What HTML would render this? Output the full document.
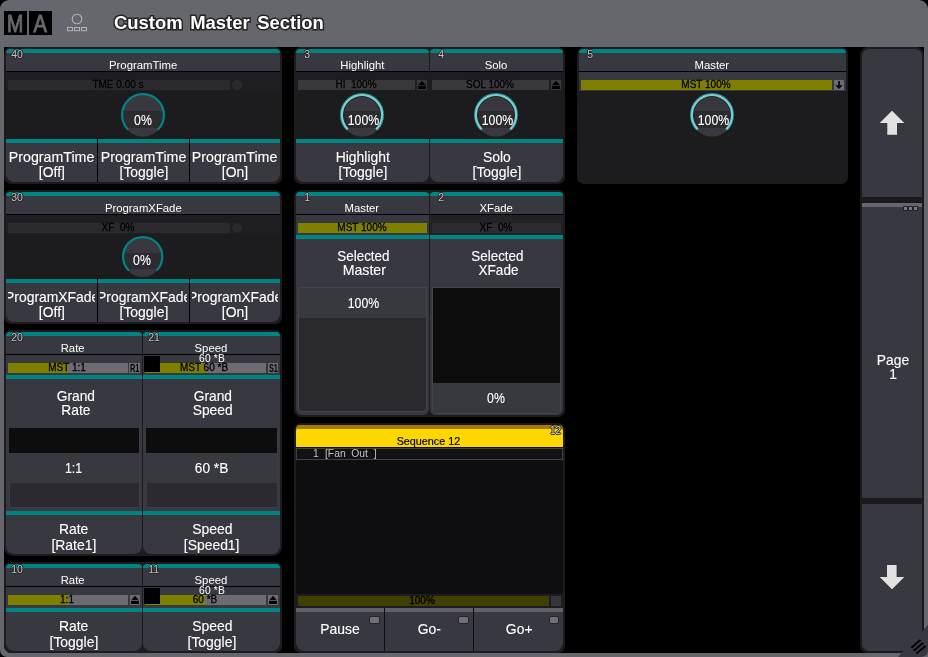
<!DOCTYPE html>
<html lang="en"><head><meta charset="utf-8"><title>Custom Master Section</title>
<style>
html,body{margin:0;padding:0;background:#000;}
body{width:928px;height:657px;position:relative;overflow:hidden;font-family:"Liberation Sans",sans-serif;}
.b{position:absolute;box-sizing:border-box;}
.x{position:absolute;white-space:nowrap;overflow:visible;pointer-events:none;will-change:transform;}
.t{display:inline-block;white-space:nowrap;}
.k .t,.k.t{-webkit-text-stroke:0.12px currentColor;}
.num{text-shadow:-1px 0 0 #222,1px 0 0 #222,0 -1px 0 #222,0 1px 0 #222;}
.ttl .t{-webkit-text-stroke:3px #232325;paint-order:stroke fill;}
</style></head><body>
<div class="b" style="left:0px;top:0px;width:928px;height:657px;background:#66676c;border-radius:9px 9px 0px 7px;"></div>
<div class="b" style="left:4px;top:47px;width:920px;height:605.5px;background:#000000;border-radius:0px 0px 7.5px 7.5px;"></div>
<div class="b" style="left:4px;top:11px;width:23px;height:24px;background:#000000;"></div>
<div class="b" style="left:29px;top:11px;width:23px;height:24px;background:#000000;"></div>
<div class="x " style="left:-184.9px;top:10px;width:400px;height:27px;line-height:27px;font-size:24.5px;color:#66676c;text-align:center;-webkit-text-stroke:1px #66676c;"><span class="t" style="transform:scaleX(0.8);transform-origin:center center">M</span></div>
<div class="x " style="left:-160.3px;top:10px;width:400px;height:27px;line-height:27px;font-size:24.5px;color:#66676c;text-align:center;-webkit-text-stroke:1px #66676c;"><span class="t" style="transform:scaleX(0.82);transform-origin:center center">A</span></div>
<svg class="b" style="left:62px;top:10px" width="30" height="26" viewBox="62 10 30 26"><circle cx="77" cy="19" r="4.8" fill="none" stroke="#b4b4b8" stroke-width="1.1"/><rect x="67.5" y="27.5" width="5" height="3.2" fill="none" stroke="#b4b4b8" stroke-width="1"/><rect x="74.5" y="27.5" width="5" height="3.2" fill="none" stroke="#b4b4b8" stroke-width="1"/><rect x="81.5" y="27.5" width="5" height="3.2" fill="none" stroke="#b4b4b8" stroke-width="1"/></svg>
<div class="x ttl" style="left:114px;top:12px;width:400px;height:21px;line-height:21px;font-size:19px;color:#ffffff;text-align:left;font-weight:700;word-spacing:2.6px;"><span class="t" style="transform:scaleX(0.97);transform-origin:left center">Custom Master Section</span></div>
<div class="b" style="left:4px;top:47px;width:278px;height:136.5px;background:#1c1c1e;border-radius:7px;"></div>
<div class="b" style="left:6px;top:49px;width:274.2px;height:132.5px;background:#000000;border-radius:5px 5px 7.5px 7.5px;"></div>
<div class="b" style="left:6px;top:72px;width:274.2px;height:67px;background:#1c1c1e;"></div>
<div class="b" style="left:6px;top:72px;width:274.2px;height:19px;background:#1e1e22;"></div>
<div class="b" style="left:6px;top:49px;width:274.2px;height:22px;background:#383840;border-radius:6.5px 6.5px 0px 0px;"></div>
<div class="b" style="left:6px;top:49px;width:274.2px;height:4px;background:#008585;border-radius:6.5px 6.5px 0px 0px;"></div>
<div class="b" style="left:6px;top:71px;width:274.2px;height:1px;background:#000000;"></div>
<div class="x num" style="left:-182.8px;top:48.3px;width:400px;height:12px;line-height:12px;font-size:11px;color:#c4c4c8;text-align:center;"><span class="t" style="transform:scaleX(0.95);transform-origin:center center">40</span></div>
<div class="x " style="left:-57.5px;top:59.4px;width:400px;height:12px;line-height:12px;font-size:11px;color:#ffffff;text-align:center;"><span class="t" style="transform:scaleX(1.03);transform-origin:center center">ProgramTime</span></div>
<div class="b" style="left:8px;top:80px;width:222px;height:10px;background:#2a2a2c;"></div>
<div class="x " style="left:-81.8px;top:79.2px;width:400px;height:11px;line-height:11px;font-size:10px;color:#000;text-align:center;-webkit-text-stroke:0.3px #000;"><span class="t" style="transform:scaleX(1);transform-origin:center center">TME 0.00 s</span></div>
<div class="b" style="left:232px;top:80px;width:10px;height:10px;background:#2a2a2c;border-radius:5px;"></div>
<svg class="b" style="left:119px;top:91px" width="48" height="48" viewBox="-24 -24 48 48"><circle cx="0" cy="0" r="21.7" fill="#38383e"/><clipPath id="k0"><circle cx="0" cy="0" r="21.7"/></clipPath><rect x="-22" y="-4" width="44" height="17" fill="#2b2b30" clip-path="url(#k0)"/><path d="M-14.78 14.78A20.9 20.9 0 1 1 14.78 14.78" fill="none" stroke="#008585" stroke-width="2.2"/></svg>
<div class="x  k" style="left:-56.6px;top:111px;width:400px;height:17px;line-height:17px;font-size:15.2px;color:#ffffff;text-align:center;"><span class="t" style="transform:scaleX(0.81);transform-origin:center center">0%</span></div>
<div class="b" style="left:6px;top:139px;width:91px;height:42.5px;background:#383840;border-radius:0px 0px 0px 7.5px;overflow:hidden;"></div>
<div class="b" style="left:6px;top:139px;width:91px;height:4px;background:#008585;"></div>
<div class="b" style="left:8px;top:143px;width:87px;height:38.5px;overflow:hidden">
<div class="x k" style="left:-156.5px;top:5.8px;width:400px;height:16px;line-height:16px;font-size:14.8px;color:#ffffff;text-align:center"><span class="t" style="transform:scaleX(0.96)">ProgramTime</span></div>
<div class="x k" style="left:-156.5px;top:21.2px;width:400px;height:16px;line-height:16px;font-size:14.8px;color:#ffffff;text-align:center"><span class="t" style="transform:scaleX(0.94)">[Off]</span></div>
</div>
<div class="b" style="left:98px;top:139px;width:91px;height:42.5px;background:#383840;overflow:hidden;"></div>
<div class="b" style="left:98px;top:139px;width:91px;height:4px;background:#008585;"></div>
<div class="b" style="left:100px;top:143px;width:87px;height:38.5px;overflow:hidden">
<div class="x k" style="left:-156.5px;top:5.8px;width:400px;height:16px;line-height:16px;font-size:14.8px;color:#ffffff;text-align:center"><span class="t" style="transform:scaleX(0.96)">ProgramTime</span></div>
<div class="x k" style="left:-156.5px;top:21.2px;width:400px;height:16px;line-height:16px;font-size:14.8px;color:#ffffff;text-align:center"><span class="t" style="transform:scaleX(0.94)">[Toggle]</span></div>
</div>
<div class="b" style="left:190px;top:139px;width:90.2px;height:42.5px;background:#383840;border-radius:0px 0px 7.5px 0px;overflow:hidden;"></div>
<div class="b" style="left:190px;top:139px;width:90.2px;height:4px;background:#008585;"></div>
<div class="b" style="left:192px;top:143px;width:86.2px;height:38.5px;overflow:hidden">
<div class="x k" style="left:-156.9px;top:5.8px;width:400px;height:16px;line-height:16px;font-size:14.8px;color:#ffffff;text-align:center"><span class="t" style="transform:scaleX(0.96)">ProgramTime</span></div>
<div class="x k" style="left:-156.9px;top:21.2px;width:400px;height:16px;line-height:16px;font-size:14.8px;color:#ffffff;text-align:center"><span class="t" style="transform:scaleX(0.94)">[On]</span></div>
</div>
<div class="b" style="left:4px;top:190px;width:278px;height:133.5px;background:#1c1c1e;border-radius:7px;"></div>
<div class="b" style="left:6px;top:192px;width:274.2px;height:129.5px;background:#000000;border-radius:5px 5px 7.5px 7.5px;"></div>
<div class="b" style="left:6px;top:215px;width:274.2px;height:64px;background:#1c1c1e;"></div>
<div class="b" style="left:6px;top:215px;width:274.2px;height:19px;background:#1e1e22;"></div>
<div class="b" style="left:6px;top:192px;width:274.2px;height:22px;background:#383840;border-radius:6.5px 6.5px 0px 0px;"></div>
<div class="b" style="left:6px;top:192px;width:274.2px;height:4px;background:#008585;border-radius:6.5px 6.5px 0px 0px;"></div>
<div class="b" style="left:6px;top:214px;width:274.2px;height:1px;background:#000000;"></div>
<div class="x num" style="left:-182.8px;top:191.3px;width:400px;height:12px;line-height:12px;font-size:11px;color:#c4c4c8;text-align:center;"><span class="t" style="transform:scaleX(0.95);transform-origin:center center">30</span></div>
<div class="x " style="left:-57.5px;top:202.4px;width:400px;height:12px;line-height:12px;font-size:11px;color:#ffffff;text-align:center;"><span class="t" style="transform:scaleX(1.03);transform-origin:center center">ProgramXFade</span></div>
<div class="b" style="left:8px;top:223px;width:222px;height:10px;background:#2a2a2c;"></div>
<div class="x " style="left:-81.8px;top:222.2px;width:400px;height:11px;line-height:11px;font-size:10px;color:#000;text-align:center;-webkit-text-stroke:0.3px #000;"><span class="t" style="transform:scaleX(1);transform-origin:center center">XF&nbsp; 0%</span></div>
<div class="b" style="left:232px;top:223px;width:10px;height:10px;background:#2a2a2c;border-radius:5px;"></div>
<svg class="b" style="left:119.8px;top:233.8px" width="45.4" height="45.4" viewBox="-22.7 -22.7 45.4 45.4"><circle cx="0" cy="0" r="20.4" fill="#38383e"/><clipPath id="k1"><circle cx="0" cy="0" r="20.4"/></clipPath><rect x="-20.7" y="-3.5" width="41.4" height="16" fill="#2b2b30" clip-path="url(#k1)"/><path d="M-13.86 13.86A19.6 19.6 0 1 1 13.86 13.86" fill="none" stroke="#008585" stroke-width="2.2"/></svg>
<div class="x  k" style="left:-58.1px;top:251.2px;width:400px;height:17px;line-height:17px;font-size:15.2px;color:#ffffff;text-align:center;"><span class="t" style="transform:scaleX(0.81);transform-origin:center center">0%</span></div>
<div class="b" style="left:6px;top:279px;width:91px;height:42.5px;background:#383840;border-radius:0px 0px 0px 7.5px;overflow:hidden;"></div>
<div class="b" style="left:6px;top:279px;width:91px;height:4px;background:#008585;"></div>
<div class="b" style="left:8px;top:283px;width:87px;height:38.5px;overflow:hidden">
<div class="x k" style="left:-156.5px;top:5.8px;width:400px;height:16px;line-height:16px;font-size:14.8px;color:#ffffff;text-align:center"><span class="t" style="transform:scaleX(0.94)">ProgramXFade</span></div>
<div class="x k" style="left:-156.5px;top:21.2px;width:400px;height:16px;line-height:16px;font-size:14.8px;color:#ffffff;text-align:center"><span class="t" style="transform:scaleX(0.94)">[Off]</span></div>
</div>
<div class="b" style="left:98px;top:279px;width:91px;height:42.5px;background:#383840;overflow:hidden;"></div>
<div class="b" style="left:98px;top:279px;width:91px;height:4px;background:#008585;"></div>
<div class="b" style="left:100px;top:283px;width:87px;height:38.5px;overflow:hidden">
<div class="x k" style="left:-156.5px;top:5.8px;width:400px;height:16px;line-height:16px;font-size:14.8px;color:#ffffff;text-align:center"><span class="t" style="transform:scaleX(0.94)">ProgramXFade</span></div>
<div class="x k" style="left:-156.5px;top:21.2px;width:400px;height:16px;line-height:16px;font-size:14.8px;color:#ffffff;text-align:center"><span class="t" style="transform:scaleX(0.94)">[Toggle]</span></div>
</div>
<div class="b" style="left:190px;top:279px;width:90.2px;height:42.5px;background:#383840;border-radius:0px 0px 7.5px 0px;overflow:hidden;"></div>
<div class="b" style="left:190px;top:279px;width:90.2px;height:4px;background:#008585;"></div>
<div class="b" style="left:192px;top:283px;width:86.2px;height:38.5px;overflow:hidden">
<div class="x k" style="left:-156.9px;top:5.8px;width:400px;height:16px;line-height:16px;font-size:14.8px;color:#ffffff;text-align:center"><span class="t" style="transform:scaleX(0.94)">ProgramXFade</span></div>
<div class="x k" style="left:-156.9px;top:21.2px;width:400px;height:16px;line-height:16px;font-size:14.8px;color:#ffffff;text-align:center"><span class="t" style="transform:scaleX(0.94)">[On]</span></div>
</div>
<div class="b" style="left:294px;top:47px;width:271px;height:136.5px;background:#1c1c1e;border-radius:7px;"></div>
<div class="b" style="left:296px;top:49px;width:133px;height:132.5px;background:#1c1c1e;border-radius:5px 5px 6px 6px;"></div>
<div class="b" style="left:296px;top:72px;width:133px;height:19px;background:#1e1e22;"></div>
<div class="b" style="left:296px;top:49px;width:133px;height:22px;background:#383840;border-radius:6.5px 6.5px 0px 0px;"></div>
<div class="b" style="left:296px;top:49px;width:133px;height:4px;background:#008585;border-radius:6.5px 6.5px 0px 0px;"></div>
<div class="b" style="left:296px;top:71px;width:133px;height:1px;background:#000000;"></div>
<div class="x num" style="left:107.2px;top:48.3px;width:400px;height:12px;line-height:12px;font-size:11px;color:#c4c4c8;text-align:center;"><span class="t" style="transform:scaleX(0.95);transform-origin:center center">3</span></div>
<div class="x " style="left:161.9px;top:59.4px;width:400px;height:12px;line-height:12px;font-size:11px;color:#ffffff;text-align:center;"><span class="t" style="transform:scaleX(1.03);transform-origin:center center">Highlight</span></div>
<div class="b" style="left:298px;top:80px;width:117px;height:10px;background:#39393b;"></div>
<div class="x " style="left:155.7px;top:79.2px;width:400px;height:11px;line-height:11px;font-size:10px;color:#000;text-align:center;-webkit-text-stroke:0.3px #000;"><span class="t" style="transform:scaleX(1);transform-origin:center center">HI&nbsp; 100%</span></div>
<div class="b" style="left:417px;top:80px;width:10px;height:10px;background:#39393b;"></div>
<svg class="b" style="left:417px;top:80px" width="10" height="10" viewBox="0 0 10 10"><path d="M5 0.8L8.7 4.9H1.3Z" fill="#000"/><rect x="1.1" y="5.8" width="7.8" height="3.2" fill="#000"/></svg>
<svg class="b" style="left:338px;top:91px" width="48" height="48" viewBox="-24 -24 48 48"><circle cx="0" cy="0" r="21.7" fill="#38383e"/><clipPath id="k2"><circle cx="0" cy="0" r="21.7"/></clipPath><rect x="-22" y="-4" width="44" height="17" fill="#2b2b30" clip-path="url(#k2)"/><path d="M-13.15 13.15A18.6 18.6 0 1 1 13.15 13.15" fill="none" stroke="#242428" stroke-width="1.2"/><path d="M-14.5 14.5A20.5 20.5 0 1 1 14.5 14.5" fill="none" stroke="#169696" stroke-width="3.0"/><path d="M-14.21 14.21A20.1 20.1 0 1 1 14.21 14.21" fill="none" stroke="#84caca" stroke-width="2.0"/></svg>
<div class="x  k" style="left:162.6px;top:111px;width:400px;height:17px;line-height:17px;font-size:15.2px;color:#ffffff;text-align:center;"><span class="t" style="transform:scaleX(0.81);transform-origin:center center">100%</span></div>
<div class="b" style="left:296px;top:139px;width:133px;height:42.5px;background:#383840;border-radius:0px 0px 7.5px 7.5px;overflow:hidden;"></div>
<div class="b" style="left:296px;top:139px;width:133px;height:4px;background:#008585;"></div>
<div class="b" style="left:298px;top:143px;width:129px;height:38.5px;overflow:hidden">
<div class="x k" style="left:-135.5px;top:5.8px;width:400px;height:16px;line-height:16px;font-size:14.8px;color:#ffffff;text-align:center"><span class="t" style="transform:scaleX(0.94)">Highlight</span></div>
<div class="x k" style="left:-135.5px;top:21.2px;width:400px;height:16px;line-height:16px;font-size:14.8px;color:#ffffff;text-align:center"><span class="t" style="transform:scaleX(0.94)">[Toggle]</span></div>
</div>
<div class="b" style="left:430px;top:49px;width:133.3px;height:132.5px;background:#1c1c1e;border-radius:5px 5px 6px 6px;"></div>
<div class="b" style="left:430px;top:72px;width:133.3px;height:19px;background:#1e1e22;"></div>
<div class="b" style="left:430px;top:49px;width:133.3px;height:22px;background:#383840;border-radius:6.5px 6.5px 0px 0px;"></div>
<div class="b" style="left:430px;top:49px;width:133.3px;height:4px;background:#008585;border-radius:6.5px 6.5px 0px 0px;"></div>
<div class="b" style="left:430px;top:71px;width:133.3px;height:1px;background:#000000;"></div>
<div class="x num" style="left:241.2px;top:48.3px;width:400px;height:12px;line-height:12px;font-size:11px;color:#c4c4c8;text-align:center;"><span class="t" style="transform:scaleX(0.95);transform-origin:center center">4</span></div>
<div class="x " style="left:296.05px;top:59.4px;width:400px;height:12px;line-height:12px;font-size:11px;color:#ffffff;text-align:center;"><span class="t" style="transform:scaleX(1.03);transform-origin:center center">Solo</span></div>
<div class="b" style="left:432px;top:80px;width:117.3px;height:10px;background:#39393b;"></div>
<div class="x " style="left:289.85px;top:79.2px;width:400px;height:11px;line-height:11px;font-size:10px;color:#000;text-align:center;-webkit-text-stroke:0.3px #000;"><span class="t" style="transform:scaleX(1);transform-origin:center center">SOL 100%</span></div>
<div class="b" style="left:551.3px;top:80px;width:10px;height:10px;background:#39393b;"></div>
<svg class="b" style="left:551.3px;top:80px" width="10" height="10" viewBox="0 0 10 10"><path d="M5 0.8L8.7 4.9H1.3Z" fill="#000"/><rect x="1.1" y="5.8" width="7.8" height="3.2" fill="#000"/></svg>
<svg class="b" style="left:472px;top:91px" width="48" height="48" viewBox="-24 -24 48 48"><circle cx="0" cy="0" r="21.7" fill="#38383e"/><clipPath id="k3"><circle cx="0" cy="0" r="21.7"/></clipPath><rect x="-22" y="-4" width="44" height="17" fill="#2b2b30" clip-path="url(#k3)"/><path d="M-13.15 13.15A18.6 18.6 0 1 1 13.15 13.15" fill="none" stroke="#242428" stroke-width="1.2"/><path d="M-14.5 14.5A20.5 20.5 0 1 1 14.5 14.5" fill="none" stroke="#169696" stroke-width="3.0"/><path d="M-14.21 14.21A20.1 20.1 0 1 1 14.21 14.21" fill="none" stroke="#84caca" stroke-width="2.0"/></svg>
<div class="x  k" style="left:296.6px;top:111px;width:400px;height:17px;line-height:17px;font-size:15.2px;color:#ffffff;text-align:center;"><span class="t" style="transform:scaleX(0.81);transform-origin:center center">100%</span></div>
<div class="b" style="left:430px;top:139px;width:133.3px;height:42.5px;background:#383840;border-radius:0px 0px 7.5px 7.5px;overflow:hidden;"></div>
<div class="b" style="left:430px;top:139px;width:133.3px;height:4px;background:#008585;"></div>
<div class="b" style="left:432px;top:143px;width:129.3px;height:38.5px;overflow:hidden">
<div class="x k" style="left:-135.35px;top:5.8px;width:400px;height:16px;line-height:16px;font-size:14.8px;color:#ffffff;text-align:center"><span class="t" style="transform:scaleX(0.94)">Solo</span></div>
<div class="x k" style="left:-135.35px;top:21.2px;width:400px;height:16px;line-height:16px;font-size:14.8px;color:#ffffff;text-align:center"><span class="t" style="transform:scaleX(0.94)">[Toggle]</span></div>
</div>
<div class="b" style="left:577px;top:47px;width:271px;height:137px;background:#1c1c1e;border-radius:7px;"></div>
<div class="b" style="left:579px;top:49px;width:267px;height:133px;background:#1c1c1e;border-radius:5px 5px 6px 6px;"></div>
<div class="b" style="left:579px;top:72px;width:267px;height:19px;background:#383840;"></div>
<div class="b" style="left:579px;top:49px;width:267px;height:22px;background:#383840;border-radius:6.5px 6.5px 0px 0px;"></div>
<div class="b" style="left:579px;top:49px;width:267px;height:4px;background:#008585;border-radius:6.5px 6.5px 0px 0px;"></div>
<div class="b" style="left:579px;top:71px;width:267px;height:1px;background:#000000;"></div>
<div class="x num" style="left:390.2px;top:48.3px;width:400px;height:12px;line-height:12px;font-size:11px;color:#c4c4c8;text-align:center;"><span class="t" style="transform:scaleX(0.95);transform-origin:center center">5</span></div>
<div class="x " style="left:511.9px;top:59.4px;width:400px;height:12px;line-height:12px;font-size:11px;color:#ffffff;text-align:center;"><span class="t" style="transform:scaleX(1.03);transform-origin:center center">Master</span></div>
<div class="b" style="left:581px;top:80px;width:251px;height:10px;background:#808000;"></div>
<div class="x " style="left:505.7px;top:79.2px;width:400px;height:11px;line-height:11px;font-size:10px;color:#000;text-align:center;-webkit-text-stroke:0.3px #000;"><span class="t" style="transform:scaleX(1);transform-origin:center center">MST 100%</span></div>
<div class="b" style="left:834px;top:80px;width:10px;height:10px;background:#6c6c72;"></div>
<svg class="b" style="left:834px;top:80px" width="10" height="10" viewBox="0 0 10 10"><path d="M4.2 1h1.6v4.2h2.9L5 8.9 1.3 5.2h2.9z" fill="#000"/></svg>
<svg class="b" style="left:688px;top:91px" width="48" height="48" viewBox="-24 -24 48 48"><circle cx="0" cy="0" r="21.7" fill="#38383e"/><clipPath id="k4"><circle cx="0" cy="0" r="21.7"/></clipPath><rect x="-22" y="-4" width="44" height="17" fill="#2b2b30" clip-path="url(#k4)"/><path d="M-13.15 13.15A18.6 18.6 0 1 1 13.15 13.15" fill="none" stroke="#242428" stroke-width="1.2"/><path d="M-14.5 14.5A20.5 20.5 0 1 1 14.5 14.5" fill="none" stroke="#169696" stroke-width="3.0"/><path d="M-14.21 14.21A20.1 20.1 0 1 1 14.21 14.21" fill="none" stroke="#84caca" stroke-width="2.0"/></svg>
<div class="x  k" style="left:512.6px;top:111px;width:400px;height:17px;line-height:17px;font-size:15.2px;color:#ffffff;text-align:center;"><span class="t" style="transform:scaleX(0.81);transform-origin:center center">100%</span></div>
<div class="b" style="left:4px;top:330px;width:278px;height:226.4px;background:#1c1c1e;border-radius:7px 7px 9px 9px;"></div>
<div class="b" style="left:6px;top:332px;width:136px;height:222.3px;background:#383840;border-radius:5px 5px 8px 8px;"></div>
<div class="b" style="left:6px;top:332px;width:136px;height:22px;background:#383840;border-radius:6.5px 6.5px 0px 0px;"></div>
<div class="b" style="left:6px;top:332px;width:136px;height:4px;background:#008585;border-radius:6.5px 6.5px 0px 0px;"></div>
<div class="b" style="left:6px;top:354px;width:136px;height:1px;background:#000000;"></div>
<div class="x num" style="left:-182.8px;top:331.3px;width:400px;height:12px;line-height:12px;font-size:11px;color:#c4c4c8;text-align:center;"><span class="t" style="transform:scaleX(0.95);transform-origin:center center">20</span></div>
<div class="x " style="left:-126.6px;top:342.4px;width:400px;height:12px;line-height:12px;font-size:11px;color:#ffffff;text-align:center;"><span class="t" style="transform:scaleX(1.03);transform-origin:center center">Rate</span></div>
<div class="b" style="left:8px;top:363px;width:120px;height:10px;background:#6c6c72;"></div>
<div class="b" style="left:8px;top:363px;width:60px;height:10px;background:#808000;"></div>
<div class="b" style="left:129.4px;top:363px;width:10.4px;height:10px;background:#6c6c72;"></div>
<div class="x " style="left:-65.3px;top:361.8px;width:400px;height:12px;line-height:12px;font-size:10.5px;color:#000;text-align:center;font-weight:700;"><span class="t" style="transform:scaleX(0.7);transform-origin:center center">R1</span></div>
<div class="x " style="left:-132.8px;top:362.2px;width:400px;height:11px;line-height:11px;font-size:10px;color:#000;text-align:center;-webkit-text-stroke:0.3px #000;"><span class="t" style="transform:scaleX(1);transform-origin:center center">MST 1:1</span></div>
<div class="b" style="left:6px;top:375px;width:136px;height:4px;background:#008585;"></div>
<div class="x  k" style="left:-124.5px;top:386.6px;width:400px;height:17px;line-height:17px;font-size:15px;color:#ffffff;text-align:center;"><span class="t" style="transform:scaleX(0.92);transform-origin:center center">Grand</span></div>
<div class="x  k" style="left:-124.5px;top:400.7px;width:400px;height:17px;line-height:17px;font-size:15px;color:#ffffff;text-align:center;"><span class="t" style="transform:scaleX(0.92);transform-origin:center center">Rate</span></div>
<div class="b" style="left:8.5px;top:427.5px;width:131px;height:80.5px;background:#2a2a30;border-radius:0px 0px 2.5px 2.5px;border:1px solid #3d3d43;"></div>
<div class="b" style="left:9px;top:428px;width:130px;height:24.6px;background:#0d0d0e;"></div>
<div class="b" style="left:9px;top:452.6px;width:130px;height:30.4px;background:#38383f;"></div>
<div class="x  k" style="left:-126px;top:459px;width:400px;height:17px;line-height:17px;font-size:15.2px;color:#ffffff;text-align:center;"><span class="t" style="transform:scaleX(0.82);transform-origin:center center">1:1</span></div>
<div class="b" style="left:6px;top:511px;width:136px;height:4px;background:#008585;"></div>
<div class="x  k" style="left:-126px;top:520.6px;width:400px;height:16px;line-height:16px;font-size:14.8px;color:#ffffff;text-align:center;"><span class="t" style="transform:scaleX(0.94);transform-origin:center center">Rate</span></div>
<div class="x  k" style="left:-126px;top:536.6px;width:400px;height:16px;line-height:16px;font-size:14.8px;color:#ffffff;text-align:center;"><span class="t" style="transform:scaleX(0.94);transform-origin:center center">[Rate1]</span></div>
<div class="b" style="left:143px;top:332px;width:137.2px;height:222.3px;background:#383840;border-radius:5px 5px 8px 8px;"></div>
<div class="b" style="left:143px;top:332px;width:137.2px;height:22px;background:#383840;border-radius:6.5px 6.5px 0px 0px;"></div>
<div class="b" style="left:143px;top:332px;width:137.2px;height:4px;background:#008585;border-radius:6.5px 6.5px 0px 0px;"></div>
<div class="b" style="left:143px;top:354px;width:137.2px;height:1px;background:#000000;"></div>
<div class="x num" style="left:-45.8px;top:331.3px;width:400px;height:12px;line-height:12px;font-size:11px;color:#c4c4c8;text-align:center;"><span class="t" style="transform:scaleX(0.95);transform-origin:center center">21</span></div>
<div class="x " style="left:11px;top:342.4px;width:400px;height:12px;line-height:12px;font-size:11px;color:#ffffff;text-align:center;"><span class="t" style="transform:scaleX(1.03);transform-origin:center center">Speed</span></div>
<div class="x " style="left:11.6px;top:353.3px;width:400px;height:11px;line-height:11px;font-size:10.3px;color:#ffffff;text-align:center;letter-spacing:0.15px;"><span class="t" style="transform:scaleX(1);transform-origin:center center">60 *B</span></div>
<div class="b" style="left:145px;top:363px;width:121.2px;height:10px;background:#6c6c72;"></div>
<div class="b" style="left:145px;top:363px;width:60px;height:10px;background:#808000;"></div>
<div class="b" style="left:267.6px;top:363px;width:10.4px;height:10px;background:#6c6c72;"></div>
<div class="x " style="left:72.9px;top:361.8px;width:400px;height:12px;line-height:12px;font-size:10.5px;color:#000;text-align:center;font-weight:700;"><span class="t" style="transform:scaleX(0.7);transform-origin:center center">S1</span></div>
<div class="x " style="left:3.8px;top:362.2px;width:400px;height:11px;line-height:11px;font-size:10px;color:#000;text-align:center;-webkit-text-stroke:0.3px #000;"><span class="t" style="transform:scaleX(1);transform-origin:center center">MST 60 *B</span></div>
<div class="b" style="left:144px;top:356px;width:16px;height:16px;background:#000000;"></div>
<div class="b" style="left:143px;top:375px;width:137.2px;height:4px;background:#008585;"></div>
<div class="x  k" style="left:13.1px;top:386.6px;width:400px;height:17px;line-height:17px;font-size:15px;color:#ffffff;text-align:center;"><span class="t" style="transform:scaleX(0.92);transform-origin:center center">Grand</span></div>
<div class="x  k" style="left:13.1px;top:400.7px;width:400px;height:17px;line-height:17px;font-size:15px;color:#ffffff;text-align:center;"><span class="t" style="transform:scaleX(0.92);transform-origin:center center">Speed</span></div>
<div class="b" style="left:145.5px;top:427.5px;width:132.2px;height:80.5px;background:#2a2a30;border-radius:0px 0px 2.5px 2.5px;border:1px solid #3d3d43;"></div>
<div class="b" style="left:146px;top:428px;width:131.2px;height:24.6px;background:#0d0d0e;"></div>
<div class="b" style="left:146px;top:452.6px;width:131.2px;height:30.4px;background:#38383f;"></div>
<div class="x  k" style="left:11.6px;top:459px;width:400px;height:17px;line-height:17px;font-size:15.2px;color:#ffffff;text-align:center;"><span class="t" style="transform:scaleX(0.9);transform-origin:center center">60 *B</span></div>
<div class="b" style="left:143px;top:511px;width:137.2px;height:4px;background:#008585;"></div>
<div class="x  k" style="left:11.6px;top:520.6px;width:400px;height:16px;line-height:16px;font-size:14.8px;color:#ffffff;text-align:center;"><span class="t" style="transform:scaleX(0.94);transform-origin:center center">Speed</span></div>
<div class="x  k" style="left:11.6px;top:536.6px;width:400px;height:16px;line-height:16px;font-size:14.8px;color:#ffffff;text-align:center;"><span class="t" style="transform:scaleX(0.94);transform-origin:center center">[Speed1]</span></div>
<div class="b" style="left:4px;top:562px;width:278px;height:90.5px;background:#1c1c1e;border-radius:7px 7px 7px 7px;"></div>
<div class="b" style="left:6px;top:564px;width:136px;height:86.7px;background:#383840;border-radius:5px 5px 8px 8px;"></div>
<div class="b" style="left:6px;top:564px;width:136px;height:22px;background:#383840;border-radius:6.5px 6.5px 0px 0px;"></div>
<div class="b" style="left:6px;top:564px;width:136px;height:4px;background:#008585;border-radius:6.5px 6.5px 0px 0px;"></div>
<div class="b" style="left:6px;top:586px;width:136px;height:1px;background:#000000;"></div>
<div class="x num" style="left:-182.8px;top:563.3px;width:400px;height:12px;line-height:12px;font-size:11px;color:#c4c4c8;text-align:center;"><span class="t" style="transform:scaleX(0.95);transform-origin:center center">10</span></div>
<div class="x " style="left:-126.6px;top:574.4px;width:400px;height:12px;line-height:12px;font-size:11px;color:#ffffff;text-align:center;"><span class="t" style="transform:scaleX(1.03);transform-origin:center center">Rate</span></div>
<div class="b" style="left:8px;top:595px;width:120px;height:10px;background:#6c6c72;"></div>
<div class="b" style="left:8px;top:595px;width:60px;height:10px;background:#808000;"></div>
<div class="b" style="left:130px;top:595px;width:10px;height:10px;background:#6c6c72;"></div>
<svg class="b" style="left:130px;top:595px" width="10" height="10" viewBox="0 0 10 10"><path d="M5 0.8L8.7 4.9H1.3Z" fill="#000"/><rect x="1.1" y="5.8" width="7.8" height="3.2" fill="#000"/></svg>
<div class="x " style="left:-132.8px;top:594.2px;width:400px;height:11px;line-height:11px;font-size:10px;color:#000;text-align:center;-webkit-text-stroke:0.3px #000;"><span class="t" style="transform:scaleX(1);transform-origin:center center">1:1</span></div>
<div class="b" style="left:6px;top:608px;width:136px;height:4px;background:#008585;"></div>
<div class="x  k" style="left:-126px;top:618px;width:400px;height:16px;line-height:16px;font-size:14.8px;color:#ffffff;text-align:center;"><span class="t" style="transform:scaleX(0.94);transform-origin:center center">Rate</span></div>
<div class="x  k" style="left:-126px;top:633.8px;width:400px;height:16px;line-height:16px;font-size:14.8px;color:#ffffff;text-align:center;"><span class="t" style="transform:scaleX(0.94);transform-origin:center center">[Toggle]</span></div>
<div class="b" style="left:143px;top:564px;width:137.2px;height:86.7px;background:#383840;border-radius:5px 5px 8px 8px;"></div>
<div class="b" style="left:143px;top:564px;width:137.2px;height:22px;background:#383840;border-radius:6.5px 6.5px 0px 0px;"></div>
<div class="b" style="left:143px;top:564px;width:137.2px;height:4px;background:#008585;border-radius:6.5px 6.5px 0px 0px;"></div>
<div class="b" style="left:143px;top:586px;width:137.2px;height:1px;background:#000000;"></div>
<div class="x num" style="left:-45.8px;top:563.3px;width:400px;height:12px;line-height:12px;font-size:11px;color:#c4c4c8;text-align:center;"><span class="t" style="transform:scaleX(0.95);transform-origin:center center">11</span></div>
<div class="x " style="left:11px;top:574.4px;width:400px;height:12px;line-height:12px;font-size:11px;color:#ffffff;text-align:center;"><span class="t" style="transform:scaleX(1.03);transform-origin:center center">Speed</span></div>
<div class="x " style="left:11.6px;top:585.4px;width:400px;height:11px;line-height:11px;font-size:10.3px;color:#ffffff;text-align:center;letter-spacing:0.15px;"><span class="t" style="transform:scaleX(1);transform-origin:center center">60 *B</span></div>
<div class="b" style="left:145px;top:595px;width:121.2px;height:10px;background:#6c6c72;"></div>
<div class="b" style="left:145px;top:595px;width:60px;height:10px;background:#808000;"></div>
<div class="b" style="left:268.2px;top:595px;width:10px;height:10px;background:#6c6c72;"></div>
<svg class="b" style="left:268.2px;top:595px" width="10" height="10" viewBox="0 0 10 10"><path d="M5 0.8L8.7 4.9H1.3Z" fill="#000"/><rect x="1.1" y="5.8" width="7.8" height="3.2" fill="#000"/></svg>
<div class="x " style="left:4.8px;top:594.2px;width:400px;height:11px;line-height:11px;font-size:10px;color:#000;text-align:center;-webkit-text-stroke:0.3px #000;"><span class="t" style="transform:scaleX(1);transform-origin:center center">60 *B</span></div>
<div class="b" style="left:144px;top:588px;width:16px;height:16px;background:#000000;"></div>
<div class="b" style="left:143px;top:608px;width:137.2px;height:4px;background:#008585;"></div>
<div class="x  k" style="left:11.6px;top:618px;width:400px;height:16px;line-height:16px;font-size:14.8px;color:#ffffff;text-align:center;"><span class="t" style="transform:scaleX(0.94);transform-origin:center center">Speed</span></div>
<div class="x  k" style="left:11.6px;top:633.8px;width:400px;height:16px;line-height:16px;font-size:14.8px;color:#ffffff;text-align:center;"><span class="t" style="transform:scaleX(0.94);transform-origin:center center">[Toggle]</span></div>
<div class="b" style="left:294px;top:190px;width:271px;height:227.3px;background:#1c1c1e;border-radius:7px;"></div>
<div class="b" style="left:296px;top:192px;width:133px;height:223px;background:#383840;border-radius:5px 5px 6px 6px;"></div>
<div class="b" style="left:296px;top:192px;width:133px;height:22px;background:#383840;border-radius:6.5px 6.5px 0px 0px;"></div>
<div class="b" style="left:296px;top:192px;width:133px;height:4px;background:#008585;border-radius:6.5px 6.5px 0px 0px;"></div>
<div class="b" style="left:296px;top:214px;width:133px;height:1px;background:#000000;"></div>
<div class="x num" style="left:107.2px;top:191.3px;width:400px;height:12px;line-height:12px;font-size:11px;color:#c4c4c8;text-align:center;"><span class="t" style="transform:scaleX(0.95);transform-origin:center center">1</span></div>
<div class="x " style="left:161.9px;top:202.4px;width:400px;height:12px;line-height:12px;font-size:11px;color:#ffffff;text-align:center;"><span class="t" style="transform:scaleX(1.03);transform-origin:center center">Master</span></div>
<div class="b" style="left:298px;top:223px;width:129px;height:10px;background:#808000;"></div>
<div class="x " style="left:161.7px;top:222.2px;width:400px;height:11px;line-height:11px;font-size:10px;color:#000;text-align:center;-webkit-text-stroke:0.3px #000;"><span class="t" style="transform:scaleX(1);transform-origin:center center">MST 100%</span></div>
<div class="b" style="left:296px;top:235px;width:133px;height:4px;background:#008585;"></div>
<div class="x  k" style="left:163.3px;top:247.6px;width:400px;height:16px;line-height:16px;font-size:14.6px;color:#ffffff;text-align:center;"><span class="t" style="transform:scaleX(0.92);transform-origin:center center">Selected</span></div>
<div class="x  k" style="left:163.7px;top:261.7px;width:400px;height:16px;line-height:16px;font-size:14.6px;color:#ffffff;text-align:center;"><span class="t" style="transform:scaleX(0.97);transform-origin:center center">Master</span></div>
<div class="b" style="left:298px;top:287px;width:128.5px;height:125.3px;background:#2a2a2e;border-radius:0px 0px 5px 5px;border:1px solid #44444a;"></div>
<div class="b" style="left:299px;top:288px;width:126.5px;height:30px;background:#38383f;"></div>
<div class="x  k" style="left:163px;top:294px;width:400px;height:17px;line-height:17px;font-size:15.2px;color:#ffffff;text-align:center;"><span class="t" style="transform:scaleX(0.81);transform-origin:center center">100%</span></div>
<div class="b" style="left:430px;top:192px;width:133.3px;height:223px;background:#383840;border-radius:5px 5px 6px 6px;"></div>
<div class="b" style="left:430px;top:215px;width:133.3px;height:20px;background:#222226;"></div>
<div class="b" style="left:430px;top:192px;width:133.3px;height:22px;background:#383840;border-radius:6.5px 6.5px 0px 0px;"></div>
<div class="b" style="left:430px;top:192px;width:133.3px;height:4px;background:#008585;border-radius:6.5px 6.5px 0px 0px;"></div>
<div class="b" style="left:430px;top:214px;width:133.3px;height:1px;background:#000000;"></div>
<div class="x num" style="left:241.2px;top:191.3px;width:400px;height:12px;line-height:12px;font-size:11px;color:#c4c4c8;text-align:center;"><span class="t" style="transform:scaleX(0.95);transform-origin:center center">2</span></div>
<div class="x " style="left:296.05px;top:202.4px;width:400px;height:12px;line-height:12px;font-size:11px;color:#ffffff;text-align:center;"><span class="t" style="transform:scaleX(1.03);transform-origin:center center">XFade</span></div>
<div class="b" style="left:432px;top:223px;width:129px;height:10px;background:#2c2c2e;"></div>
<div class="x " style="left:295.7px;top:222.2px;width:400px;height:11px;line-height:11px;font-size:10px;color:#000;text-align:center;-webkit-text-stroke:0.3px #000;"><span class="t" style="transform:scaleX(1);transform-origin:center center">XF&nbsp; 0%</span></div>
<div class="b" style="left:430px;top:235px;width:133.3px;height:4px;background:#008585;"></div>
<div class="x  k" style="left:297.3px;top:247.6px;width:400px;height:16px;line-height:16px;font-size:14.6px;color:#ffffff;text-align:center;"><span class="t" style="transform:scaleX(0.92);transform-origin:center center">Selected</span></div>
<div class="x  k" style="left:297.5px;top:261.7px;width:400px;height:16px;line-height:16px;font-size:14.6px;color:#ffffff;text-align:center;"><span class="t" style="transform:scaleX(0.93);transform-origin:center center">XFade</span></div>
<div class="b" style="left:432px;top:287px;width:128.7px;height:127px;background:#38383f;border-radius:0px 0px 5px 5px;border:1px solid #44444a;"></div>
<div class="b" style="left:433px;top:288px;width:126.7px;height:94.5px;background:#0d0d0e;"></div>
<div class="x  k" style="left:296px;top:388.8px;width:400px;height:17px;line-height:17px;font-size:15.2px;color:#ffffff;text-align:center;"><span class="t" style="transform:scaleX(0.81);transform-origin:center center">0%</span></div>
<div class="b" style="left:294px;top:423.3px;width:271px;height:229.2px;background:#15171c;border-radius:7px;"></div>
<div class="b" style="left:294px;top:430px;width:271px;height:222.5px;background:#1c1c1e;border-radius:0px 0px 7px 7px;"></div>
<div class="b" style="left:296px;top:425px;width:267.3px;height:225.5px;background:#0e0e10;border-radius:6px 6px 8px 8px;overflow:hidden;"></div>
<div class="b" style="left:296px;top:425px;width:267.3px;height:22px;background:#ffd700;border-radius:6px 6px 0px 0px;"></div>
<div class="b" style="left:296px;top:425px;width:267.3px;height:4px;background:#a67c00;border-radius:6px 6px 0px 0px;"></div>
<div class="x " style="left:228.3px;top:434.7px;width:400px;height:12px;line-height:12px;font-size:11px;color:#000;text-align:center;-webkit-text-stroke:0.2px #000;"><span class="t" style="transform:scaleX(0.98);transform-origin:center center">Sequence 12</span></div>
<div class="x num" style="left:161.2px;top:424.2px;width:400px;height:12px;line-height:12px;font-size:11px;color:#d8d8d8;text-align:right;"><span class="t" style="transform:scaleX(0.92);transform-origin:right center">12</span></div>
<div class="b" style="left:296px;top:448.4px;width:267.3px;height:11.6px;background:#121214;border:1px solid #424246;"></div>
<div class="x " style="left:313px;top:448.3px;width:400px;height:11px;line-height:11px;font-size:10.3px;color:#c0c0c0;text-align:left;"><span class="t" style="transform:scaleX(1);transform-origin:left center">1</span></div>
<div class="x " style="left:324.5px;top:448.3px;width:400px;height:11px;line-height:11px;font-size:10.3px;color:#c0c0c0;text-align:left;"><span class="t" style="transform:scaleX(1);transform-origin:left center">[Fan&nbsp; Out&nbsp; ]</span></div>
<div class="b" style="left:296px;top:594px;width:267.3px;height:14px;background:#1d1d21;"></div>
<div class="b" style="left:298px;top:596px;width:251.3px;height:9.8px;background:#404000;"></div>
<div class="x " style="left:222.2px;top:595px;width:400px;height:11px;line-height:11px;font-size:10px;color:#000;text-align:center;-webkit-text-stroke:0.3px #000;"><span class="t" style="transform:scaleX(1);transform-origin:center center">100%</span></div>
<div class="b" style="left:551.2px;top:596px;width:9.8px;height:9.8px;background:#36363a;"></div>
<div class="b" style="left:296px;top:608px;width:88.2px;height:42.5px;background:#383840;border-radius:0px 0px 0px 8px;"></div>
<div class="b" style="left:296px;top:608px;width:88.2px;height:4px;background:#606066;"></div>
<div class="x  k" style="left:140.1px;top:620.5px;width:400px;height:16px;line-height:16px;font-size:14.8px;color:#ffffff;text-align:center;"><span class="t" style="transform:scaleX(0.94);transform-origin:center center">Pause</span></div>
<div class="b" style="left:369.4px;top:616.3px;width:10.4px;height:7.3px;background:#707076;border-radius:2px;border:1px solid #242428;"></div>
<div class="b" style="left:385.2px;top:608px;width:87.8px;height:42.5px;background:#383840;"></div>
<div class="b" style="left:385.2px;top:608px;width:87.8px;height:4px;background:#606066;"></div>
<div class="x  k" style="left:229.1px;top:620.5px;width:400px;height:16px;line-height:16px;font-size:14.8px;color:#ffffff;text-align:center;"><span class="t" style="transform:scaleX(0.94);transform-origin:center center">Go-</span></div>
<div class="b" style="left:458.2px;top:616.3px;width:10.4px;height:7.3px;background:#707076;border-radius:2px;border:1px solid #242428;"></div>
<div class="b" style="left:474px;top:608px;width:89.3px;height:42.5px;background:#383840;border-radius:0px 0px 8px 0px;"></div>
<div class="b" style="left:474px;top:608px;width:89.3px;height:4px;background:#606066;"></div>
<div class="x  k" style="left:318.65px;top:620.5px;width:400px;height:16px;line-height:16px;font-size:14.8px;color:#ffffff;text-align:center;"><span class="t" style="transform:scaleX(0.94);transform-origin:center center">Go+</span></div>
<div class="b" style="left:548.5px;top:616.3px;width:10.4px;height:7.3px;background:#707076;border-radius:2px;border:1px solid #242428;"></div>
<div class="b" style="left:860px;top:47px;width:64px;height:605.5px;background:#1a1a1c;border-radius:8px 8px 7px 7px;"></div>
<div class="b" style="left:862px;top:49px;width:60.3px;height:148px;background:#383840;border-radius:7px 7px 0px 0px;"></div>
<div class="b" style="left:862px;top:203px;width:60.3px;height:294.7px;background:#383840;"></div>
<div class="b" style="left:862px;top:203px;width:60.3px;height:4px;background:#66666c;"></div>
<div class="b" style="left:862px;top:503.7px;width:60.3px;height:147.3px;background:#383840;border-radius:0px 0px 7px 7px;"></div>
<svg class="b" style="left:876px;top:108px" width="32" height="30" viewBox="876 108 32 30"><path d="M892 110.8L904.3 123H897V134.8H887.3V123H879.7Z" fill="#e2e2e2"/></svg>
<svg class="b" style="left:876px;top:562px" width="32" height="30" viewBox="876 562 32 30"><path d="M887 565H896.6V577H904.3L892 589.2 879.7 577H887Z" fill="#e2e2e2"/></svg>
<div class="b" style="left:903px;top:206px;width:5px;height:5px;background:#222226;border-radius:1px;"></div>
<div class="b" style="left:904px;top:207px;width:3px;height:3px;background:#7a7a80;"></div>
<div class="b" style="left:908px;top:206px;width:5px;height:5px;background:#222226;border-radius:1px;"></div>
<div class="b" style="left:909px;top:207px;width:3px;height:3px;background:#7a7a80;"></div>
<div class="b" style="left:913px;top:206px;width:5px;height:5px;background:#222226;border-radius:1px;"></div>
<div class="b" style="left:914px;top:207px;width:3px;height:3px;background:#7a7a80;"></div>
<div class="x  k" style="left:693.4px;top:351.6px;width:400px;height:16px;line-height:16px;font-size:14.6px;color:#ffffff;text-align:center;"><span class="t" style="transform:scaleX(0.95);transform-origin:center center">Page</span></div>
<div class="x  k" style="left:692.8px;top:365.8px;width:400px;height:16px;line-height:16px;font-size:14.6px;color:#ffffff;text-align:center;"><span class="t" style="transform:scaleX(0.95);transform-origin:center center">1</span></div>
<svg class="b" style="left:894px;top:621px" width="34" height="36" viewBox="894 621 34 36"><path d="M928 625L898 657H921Q928 657 928 650Z" fill="#383840"/><path d="M911.4 647.7L920.5 639.9M913.7 650.8L923.2 642.8M916.4 653.6L925.5 645.9" stroke="#000" stroke-width="1.9" fill="none"/></svg>
</body></html>
